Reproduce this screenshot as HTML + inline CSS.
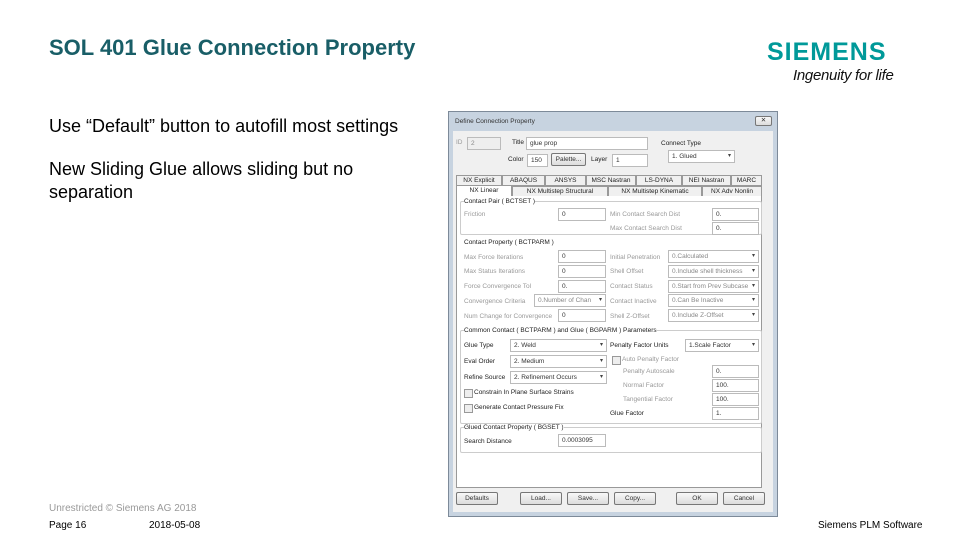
<!DOCTYPE html>
<html><head><meta charset="utf-8"><style>
body{margin:0;width:960px;height:540px;background:#fff;position:relative;overflow:hidden;font-family:"Liberation Sans",sans-serif}
.a{position:absolute;white-space:nowrap}
.t{font-size:6.5px;color:#222}
.g{font-size:6.5px;color:#999}
.f{position:absolute;background:#fff;border:1px solid #bbb;box-sizing:border-box;font-size:6.5px;color:#333;padding-left:3px;line-height:11px;height:13px}
.dd::after{content:"▾";position:absolute;right:3px;top:0;font-size:6px;color:#444}
.b{position:absolute;border:1px solid #777;border-radius:2px;background:linear-gradient(#f8f8f8,#dcdcdc);font-size:6.5px;text-align:center;line-height:11px;height:13px;box-sizing:border-box;color:#333}
.tab{position:absolute;border:1px solid #999;background:#f0f0f0;font-size:6.5px;text-align:center;box-sizing:border-box;height:11px;line-height:10px;color:#222}
.grp{position:absolute;border:1px solid #ccc;border-radius:2px}
.cb{position:absolute;width:7px;height:7px;border:1px solid #999;background:#eee}
</style></head><body>
<div class="a" style="left:49px;top:35px;font-size:22px;font-weight:bold;color:#195e67">SOL 401 Glue Connection Property</div>
<div class="a" style="left:767px;top:38px;font-size:25px;font-weight:bold;color:#009999;letter-spacing:1px">SIEMENS</div>
<div class="a" style="left:793px;top:67px;font-size:15px;font-style:italic;color:#111;letter-spacing:-0.3px">Ingenuity for life</div>
<div class="a" style="left:49px;top:116px;font-size:18px;color:#000">Use “Default” button to autofill most settings</div>
<div class="a" style="left:49px;top:158px;font-size:18px;color:#000;line-height:23px">New Sliding Glue allows sliding but no<br>separation</div>
<div class="a" style="left:49px;top:503px;font-size:10px;color:#999">Unrestricted © Siemens AG 2018</div>
<div class="a" style="left:49px;top:520px;font-size:10px;color:#000">Page 16</div>
<div class="a" style="left:149px;top:520px;font-size:10px;color:#000">2018-05-08</div>
<div class="a" style="left:818px;top:520px;font-size:10px;color:#000">Siemens PLM Software</div>

<div class="a" style="left:448px;top:111px;width:330px;height:406px;background:#c7d3e0;border:1px solid #7d8a99;box-sizing:border-box"></div>
<div class="a t" style="left:455px;top:118px;color:#333">Define Connection Property</div>
<div class="b" style="left:755px;top:116px;width:17px;height:10px;line-height:8px">✕</div>
<div class="a" style="left:453px;top:131px;width:320px;height:381px;background:#f0f0f0"></div>
<div class="a g" style="left:456px;top:139px">ID</div><div class="f" style="left:467px;top:137px;width:34px;background:#eee;color:#888">2</div>
<div class="a t" style="left:512px;top:139px">Title</div><div class="f" style="left:526px;top:137px;width:122px">glue prop</div>
<div class="a t" style="left:661px;top:140px">Connect Type</div><div class="f dd" style="left:668px;top:150px;width:67px">1. Glued</div>
<div class="a t" style="left:508px;top:156px">Color</div><div class="f" style="left:527px;top:154px;width:21px">150</div>
<div class="b" style="left:551px;top:153px;width:35px">Palette...</div>
<div class="a t" style="left:591px;top:156px">Layer</div><div class="f" style="left:612px;top:154px;width:36px">1</div>
<div class="tab" style="left:456px;top:175px;width:46px">NX Explicit</div>
<div class="tab" style="left:502px;top:175px;width:43px">ABAQUS</div>
<div class="tab" style="left:545px;top:175px;width:41px">ANSYS</div>
<div class="tab" style="left:586px;top:175px;width:50px">MSC Nastran</div>
<div class="tab" style="left:636px;top:175px;width:46px">LS-DYNA</div>
<div class="tab" style="left:682px;top:175px;width:49px">NEI Nastran</div>
<div class="tab" style="left:731px;top:175px;width:31px">MARC</div>
<div class="tab" style="left:456px;top:185px;width:56px;height:12px;background:#fff;border-bottom:none">NX Linear</div>
<div class="tab" style="left:512px;top:186px;width:96px">NX Multistep Structural</div>
<div class="tab" style="left:608px;top:186px;width:94px">NX Multistep Kinematic</div>
<div class="tab" style="left:702px;top:186px;width:60px">NX Adv Nonlin</div>
<div class="a" style="left:456px;top:196px;width:306px;height:292px;background:#fff;border:1px solid #999;border-top:none;box-sizing:border-box"></div>
<div class="grp" style="left:460px;top:201px;width:300px;height:32px"></div>
<div class="a t" style="left:464px;top:198px;background:#fff">Contact Pair ( BCTSET )</div>
<div class="a g" style="left:464px;top:211px">Friction</div><div class="f" style="left:558px;top:208px;width:48px">0</div>
<div class="a g" style="left:610px;top:211px">Min Contact Search Dist</div><div class="f" style="left:712px;top:208px;width:47px">0.</div>
<div class="a g" style="left:610px;top:225px">Max Contact Search Dist</div><div class="f" style="left:712px;top:222px;width:47px">0.</div>
<div class="a t" style="left:464px;top:239px">Contact Property ( BCTPARM )</div>
<div class="a g" style="left:464px;top:254px">Max Force Iterations</div><div class="f" style="left:558px;top:250px;width:48px">0</div>
<div class="a g" style="left:464px;top:268px">Max Status Iterations</div><div class="f" style="left:558px;top:265px;width:48px">0</div>
<div class="a g" style="left:464px;top:283px">Force Convergence Tol</div><div class="f" style="left:558px;top:280px;width:48px">0.</div>
<div class="a g" style="left:464px;top:298px">Convergence Criteria</div><div class="f dd" style="left:534px;top:294px;width:72px;color:#888">0.Number of Chan</div>
<div class="a g" style="left:464px;top:313px">Num Change for Convergence</div><div class="f" style="left:558px;top:309px;width:48px">0</div>
<div class="a g" style="left:610px;top:254px">Initial Penetration</div><div class="f dd" style="left:668px;top:250px;width:91px;color:#888">0.Calculated</div>
<div class="a g" style="left:610px;top:268px">Shell Offset</div><div class="f dd" style="left:668px;top:265px;width:91px;color:#888">0.Include shell thickness</div>
<div class="a g" style="left:610px;top:283px">Contact Status</div><div class="f dd" style="left:668px;top:280px;width:91px;color:#888">0.Start from Prev Subcase</div>
<div class="a g" style="left:610px;top:298px">Contact Inactive</div><div class="f dd" style="left:668px;top:294px;width:91px;color:#888">0.Can Be Inactive</div>
<div class="a g" style="left:610px;top:313px">Shell Z-Offset</div><div class="f dd" style="left:668px;top:309px;width:91px;color:#888">0.Include Z-Offset</div>
<div class="grp" style="left:460px;top:330px;width:300px;height:92px"></div>
<div class="a t" style="left:464px;top:327px;background:#fff">Common Contact ( BCTPARM ) and Glue ( BGPARM ) Parameters</div>
<div class="a t" style="left:464px;top:342px">Glue Type</div><div class="f dd" style="left:510px;top:339px;width:97px">2. Weld</div>
<div class="a t" style="left:464px;top:358px">Eval Order</div><div class="f dd" style="left:510px;top:355px;width:97px">2. Medium</div>
<div class="a t" style="left:464px;top:374px">Refine Source</div><div class="f dd" style="left:510px;top:371px;width:97px">2. Refinement Occurs</div>
<div class="cb" style="left:464px;top:389px"></div><div class="a t" style="left:474px;top:389px">Constrain In Plane Surface Strains</div>
<div class="cb" style="left:464px;top:404px"></div><div class="a t" style="left:474px;top:404px">Generate Contact Pressure Fix</div>
<div class="a t" style="left:610px;top:342px">Penalty Factor Units</div><div class="f dd" style="left:685px;top:339px;width:74px">1.Scale Factor</div>
<div class="cb" style="left:612px;top:356px"></div><div class="a g" style="left:622px;top:356px">Auto Penalty Factor</div>
<div class="a g" style="left:623px;top:368px">Penalty Autoscale</div><div class="f" style="left:712px;top:365px;width:47px">0.</div>
<div class="a g" style="left:623px;top:382px">Normal Factor</div><div class="f" style="left:712px;top:379px;width:47px">100.</div>
<div class="a g" style="left:623px;top:396px">Tangential Factor</div><div class="f" style="left:712px;top:393px;width:47px">100.</div>
<div class="a t" style="left:610px;top:410px">Glue Factor</div><div class="f" style="left:712px;top:407px;width:47px">1.</div>
<div class="grp" style="left:460px;top:427px;width:300px;height:24px"></div>
<div class="a t" style="left:464px;top:424px;background:#fff">Glued Contact Property ( BGSET )</div>
<div class="a t" style="left:464px;top:438px">Search Distance</div><div class="f" style="left:558px;top:434px;width:48px">0.0003095</div>
<div class="b" style="left:456px;top:492px;width:42px">Defaults</div>
<div class="b" style="left:520px;top:492px;width:42px">Load...</div>
<div class="b" style="left:567px;top:492px;width:42px">Save...</div>
<div class="b" style="left:614px;top:492px;width:42px">Copy...</div>
<div class="b" style="left:676px;top:492px;width:42px">OK</div>
<div class="b" style="left:723px;top:492px;width:42px">Cancel</div>
</body></html>
